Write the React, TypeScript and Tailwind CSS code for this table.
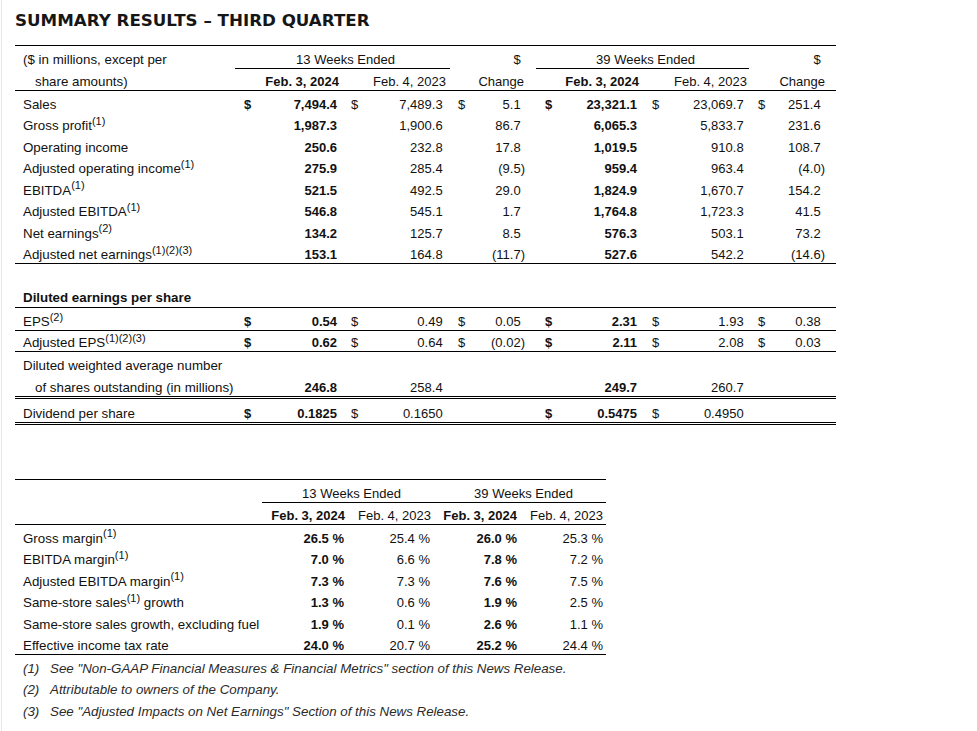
import React from 'react';

type Vals = [string, string, string, string, string, string];

interface ResultRow {
  label: React.ReactNode;
  vals: Vals;
  dollars?: string; // six flags, 1 = show "$" before the value
}

const Sup = ({ children }: { children: React.ReactNode }) => <sup className="text-[11px]">{children}</sup>;

// closing paren reserve so positives line up with (negatives)
const Num = ({ v }: { v: string }) => {
  const neg = v.startsWith('(');
  return (
    <>
      {v}
      {!neg && v !== '' && <span className="invisible">)</span>}
    </>
  );
};

const results: ResultRow[] = [
  { label: 'Sales', vals: ['7,494.4', '7,489.3', '5.1', '23,321.1', '23,069.7', '251.4'], dollars: '111111' },
  { label: <>Gross profit<Sup>(1)</Sup></>, vals: ['1,987.3', '1,900.6', '86.7', '6,065.3', '5,833.7', '231.6'] },
  { label: 'Operating income', vals: ['250.6', '232.8', '17.8', '1,019.5', '910.8', '108.7'] },
  { label: <>Adjusted operating income<Sup>(1)</Sup></>, vals: ['275.9', '285.4', '(9.5)', '959.4', '963.4', '(4.0)'] },
  { label: <>EBITDA<Sup>(1)</Sup></>, vals: ['521.5', '492.5', '29.0', '1,824.9', '1,670.7', '154.2'] },
  { label: <>Adjusted EBITDA<Sup>(1)</Sup></>, vals: ['546.8', '545.1', '1.7', '1,764.8', '1,723.3', '41.5'] },
  { label: <>Net earnings<Sup>(2)</Sup></>, vals: ['134.2', '125.7', '8.5', '576.3', '503.1', '73.2'] },
  { label: <>Adjusted net earnings<Sup>(1)(2)(3)</Sup></>, vals: ['153.1', '164.8', '(11.7)', '527.6', '542.2', '(14.6)'] },
];

const margins: { label: React.ReactNode; vals: [string, string, string, string] }[] = [
  { label: <>Gross margin<Sup>(1)</Sup></>, vals: ['26.5 %', '25.4 %', '26.0 %', '25.3 %'] },
  { label: <>EBITDA margin<Sup>(1)</Sup></>, vals: ['7.0 %', '6.6 %', '7.8 %', '7.2 %'] },
  { label: <>Adjusted EBITDA margin<Sup>(1)</Sup></>, vals: ['7.3 %', '7.3 %', '7.6 %', '7.5 %'] },
  { label: <>Same-store sales<Sup>(1)</Sup> growth</>, vals: ['1.3 %', '0.6 %', '1.9 %', '2.5 %'] },
  { label: 'Same-store sales growth, excluding fuel', vals: ['1.9 %', '0.1 %', '2.6 %', '1.1 %'] },
  { label: 'Effective income tax rate', vals: ['24.0 %', '20.7 %', '25.2 %', '24.4 %'] },
];

const footnotes = [
  ['(1)', 'See "Non-GAAP Financial Measures & Financial Metrics" section of this News Release.'],
  ['(2)', 'Attributable to owners of the Company.'],
  ['(3)', 'See "Adjusted Impacts on Net Earnings" Section of this News Release.'],
];

const ResultCells = ({ row, indent }: { row: ResultRow; indent?: boolean }) => {
  const d = row.dollars ?? '000000';
  const [a, b, c, e, f, g] = row.vals;
  return (
    <>
      <div className={`${indent ? 'pl-[20px]' : 'pl-[8px]'} pb-[1px] text-[13.33px] whitespace-nowrap`}>{row.label}</div>
      <div className="pl-[9px] pb-[1px] font-bold">{d[0] === '1' ? '$' : ''}</div>
      <div className="pr-[3px] pb-[1px] text-right font-bold">{a}</div>
      <div className="pl-[11px] pb-[1px]">{d[1] === '1' ? '$' : ''}</div>
      <div className="pr-[3px] pb-[1px] text-right"><Num v={b} /></div>
      <div className="pl-[8px] pb-[1px]">{d[2] === '1' ? '$' : ''}</div>
      <div className="pr-[3px] pb-[1px] text-right"><Num v={c} /></div>
      <div className="pl-[17px] pb-[1px] font-bold">{d[3] === '1' ? '$' : ''}</div>
      <div className="pr-[3px] pb-[1px] text-right font-bold">{e}</div>
      <div className="pl-[12px] pb-[1px]">{d[4] === '1' ? '$' : ''}</div>
      <div className="pr-[3px] pb-[1px] text-right"><Num v={f} /></div>
      <div className="pl-[7px] pb-[1px]">{d[5] === '1' ? '$' : ''}</div>
      <div className="pr-[11px] pb-[1px] text-right"><Num v={g} /></div>
    </>
  );
};

export default function App() {
  return (
    <div className="min-h-screen bg-white ml-px border-l border-[#e6e6e6] pl-[13px] text-[13px] leading-[15px] text-[#111] font-['Liberation_Sans',Arial,sans-serif]">
      <h1 className="pt-[10px] text-[16.7px] leading-[20px] font-bold text-[#161616] font-['DejaVu_Sans',Verdana,sans-serif]">
        SUMMARY RESULTS – THIRD QUARTER
      </h1>

      {/* Main results table */}
      <div className="mt-[15px] w-[821px] border-t border-black">
        <div className="grid grid-cols-[220px_23px_82px_25px_85px_20px_58px_30px_82px_25px_86px_19px_66px] h-[23px] items-end">
          <div className="pl-[8px] pb-[1px] border-b border-transparent text-[13.33px] whitespace-nowrap">($ in millions, except per</div>
          <div className="col-span-4 pl-[6px] pb-[1px] border-b border-black text-center">13 Weeks Ended</div>
          <div className="pb-[1px] border-b border-transparent" />
          <div className="pr-[3px] pb-[1px] border-b border-transparent text-right"><Num v="$" /></div>
          <div className="col-span-4 ml-[8px] mr-[2px] pl-[6px] pb-[1px] border-b border-black text-center">39 Weeks Ended</div>
          <div className="pb-[1px] border-b border-transparent" />
          <div className="pr-[11px] pb-[1px] border-b border-transparent text-right"><Num v="$" /></div>
        </div>
        <div className="grid grid-cols-[220px_23px_82px_25px_85px_20px_58px_30px_82px_25px_86px_19px_66px] h-[22px] items-end border-b border-black">
          <div className="pl-[20px] pb-[1px] text-[13.33px] whitespace-nowrap">share amounts)</div>
          <div />
          <div className="pr-[1px] pb-[1px] text-right font-bold whitespace-nowrap">Feb. 3, 2024</div>
          <div />
          <div className="pr-[4px] pb-[1px] text-right whitespace-nowrap">Feb. 4, 2023</div>
          <div />
          <div className="pr-[4px] pb-[1px] text-right">Change</div>
          <div />
          <div className="pr-[1px] pb-[1px] text-right font-bold whitespace-nowrap">Feb. 3, 2024</div>
          <div />
          <div className="pr-[4px] pb-[1px] text-right whitespace-nowrap">Feb. 4, 2023</div>
          <div />
          <div className="pr-[11px] pb-[1px] text-right">Change</div>
        </div>

        <div className="border-b border-black">
          {results.map((r, i) => (
            <div key={i} className="grid grid-cols-[220px_23px_82px_25px_85px_20px_58px_30px_82px_25px_86px_19px_66px] h-[21.5px] items-end">
              <ResultCells row={r} />
            </div>
          ))}
        </div>

        <div className="h-[21.5px]" />
        <div className="h-[22.5px] flex items-end border-b border-black">
          <div className="pl-[8px] pb-[2px] text-[13.33px] font-bold">Diluted earnings per share</div>
        </div>
        <div className="grid grid-cols-[220px_23px_82px_25px_85px_20px_58px_30px_82px_25px_86px_19px_66px] h-[23px] items-end border-b border-black">
          <ResultCells row={{ label: <>EPS<Sup>(2)</Sup></>, vals: ['0.54', '0.49', '0.05', '2.31', '1.93', '0.38'], dollars: '111111' }} />
        </div>
        <div className="grid grid-cols-[220px_23px_82px_25px_85px_20px_58px_30px_82px_25px_86px_19px_66px] h-[21px] items-end border-b border-black">
          <ResultCells row={{ label: <>Adjusted EPS<Sup>(1)(2)(3)</Sup></>, vals: ['0.62', '0.64', '(0.02)', '2.11', '2.08', '0.03'], dollars: '111111' }} />
        </div>
        <div className="h-[22px] flex items-end">
          <div className="pl-[8px] pb-[1px] text-[13.33px]">Diluted weighted average number</div>
        </div>
        <div className="grid grid-cols-[220px_23px_82px_25px_85px_20px_58px_30px_82px_25px_86px_19px_66px] h-[25px] items-end border-b-[3px] border-double border-black">
          <ResultCells row={{ label: 'of shares outstanding (in millions)', vals: ['246.8', '258.4', '', '249.7', '260.7', ''] }} indent />
        </div>
        <div className="grid grid-cols-[220px_23px_82px_25px_85px_20px_58px_30px_82px_25px_86px_19px_66px] h-[26px] items-end border-b-[3px] border-double border-black">
          <ResultCells row={{ label: 'Dividend per share', vals: ['0.1825', '0.1650', '', '0.5475', '0.4950', ''], dollars: '110110' }} />
        </div>
      </div>

      {/* Margins table */}
      <div className="mt-[54px] w-[591px] border-t border-black">
        <div className="grid grid-cols-[247px_86px_86px_86px_86px] h-[23px] items-end">
          <div className="pb-[1px] border-b border-transparent" />
          <div className="col-span-2 pl-[7px] pb-[1px] border-b border-black text-center">13 Weeks Ended</div>
          <div className="col-span-2 pl-[7px] pb-[1px] border-b border-black text-center">39 Weeks Ended</div>
        </div>
        <div className="grid grid-cols-[247px_86px_86px_86px_86px] h-[22px] items-end border-b border-black">
          <div />
          <div className="pr-[3px] pb-[1px] text-right font-bold whitespace-nowrap">Feb. 3, 2024</div>
          <div className="pr-[3px] pb-[1px] text-right whitespace-nowrap">Feb. 4, 2023</div>
          <div className="pr-[3px] pb-[1px] text-right font-bold whitespace-nowrap">Feb. 3, 2024</div>
          <div className="pr-[3px] pb-[1px] text-right whitespace-nowrap">Feb. 4, 2023</div>
        </div>
        <div className="border-b border-black">
          {margins.map((m, i) => (
            <div key={i} className="grid grid-cols-[247px_86px_86px_86px_86px] h-[21.5px] items-end">
              <div className="pl-[8px] pb-[1px] text-[13.33px] whitespace-nowrap">{m.label}</div>
              <div className="pr-[4px] pb-[1px] text-right font-bold">{m.vals[0]}</div>
              <div className="pr-[4px] pb-[1px] text-right">{m.vals[1]}</div>
              <div className="pr-[3px] pb-[1px] text-right font-bold">{m.vals[2]}</div>
              <div className="pr-[3px] pb-[1px] text-right">{m.vals[3]}</div>
            </div>
          ))}
        </div>
      </div>

      <div className="italic text-[13.33px] text-[#2b2b2b]">
        {footnotes.map(([n, t]) => (
          <div key={n} className="h-[21.5px] flex items-end">
            <span className="w-[35px] pl-[8px] pb-[1px] shrink-0">{n}</span>
            <span className="pb-[1px] whitespace-nowrap">{t}</span>
          </div>
        ))}
      </div>
    </div>
  );
}
